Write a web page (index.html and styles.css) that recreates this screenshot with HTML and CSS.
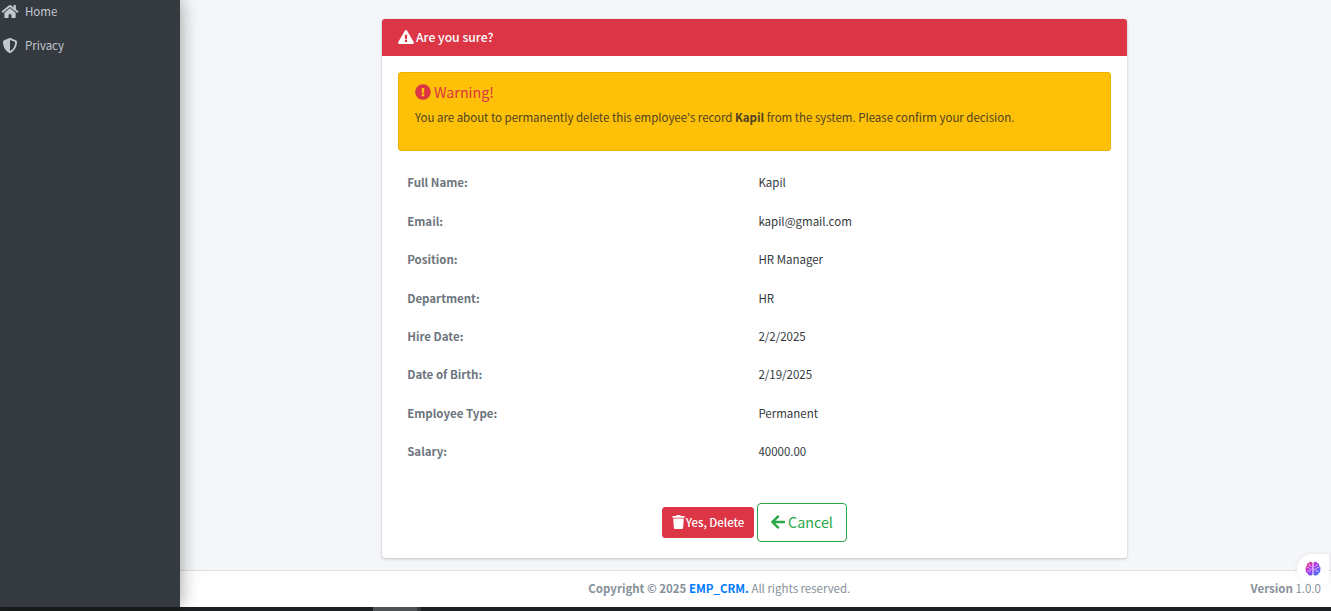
FILE: index.html
```html
<!DOCTYPE html>
<html lang="en">
<head>
<meta charset="utf-8">
<title>Delete employee - EMP_CRM</title>
<link rel="stylesheet" href="styles.css">
</head>
<body>
<div class="app">
  <aside class="sidebar">
    <a class="nav-link"><svg class="nav-icon home" viewBox="0 0 576 512"><path d="M280.4 148.3 96 300.1V464a16 16 0 0 0 16 16l112.1-.3a16 16 0 0 0 15.900-16V368a16 16 0 0 1 16-16h64a16 16 0 0 1 16 16v95.600a16 16 0 0 0 16 16.100L464 480a16 16 0 0 0 16-16V300L295.700 148.300a12.200 12.200 0 0 0-15.300 0zM571.600 251.500 488 182.600V44a12 12 0 0 0-12-12h-56a12 12 0 0 0-12 12v72.600L318.500 43a48 48 0 0 0-61 0L4.300 251.500a12 12 0 0 0-1.600 16.900l25.500 31a12 12 0 0 0 16.900 1.600L280.400 107.200a12.200 12.200 0 0 1 15.300 0L530.900 301a12 12 0 0 0 16.900-1.600l25.500-31a12 12 0 0 0-1.700-16.900z"/></svg><span>Home</span></a>
    <a class="nav-link"><svg class="nav-icon shield" viewBox="0 0 512 512"><path d="M466.500 83.700l-192-80a48.150 48.150 0 0 0-36.900 0l-192 80C27.700 91.100 16 108.600 16 128c0 198.500 114.500 335.700 221.500 380.300 11.800 4.900 25.100 4.900 36.900 0C360.100 472.600 496 349.300 496 128c0-19.400-11.700-36.900-29.500-44.300zM256.100 446.300l-.1-381 175.900 73.300c-3.300 151.400-82.100 261.100-175.800 307.700z"/></svg><span>Privacy</span></a>
  </aside>
  <div class="wrapper">
    <main class="content">
      <section class="card">
        <header class="card-header"><svg class="icon-warn" viewBox="0 0 576 512"><path d="M569.500 440C588 472 564.800 512 527.900 512H48.100c-36.900 0-60-40.100-41.600-72L246.400 24c18.500-32 64.700-32 83.200 0l239.900 416zM288 354a46 46 0 1 0 0 92 46 46 0 0 0 0-92zm-43.700-165.300 7.400 136a12 12 0 0 0 12 11.300h48.600a12 12 0 0 0 12-11.300l7.400-136a12 12 0 0 0-12-12.700h-63.400a12 12 0 0 0-12 12.700z"/></svg><span>Are you sure?</span></header>
        <div class="card-body">
          <div class="alert">
            <h4 class="alert-title"><svg class="icon-circle" viewBox="0 0 512 512"><path d="M504 256c0 137-111 248-248 248S8 393 8 256 119 8 256 8s248 111 248 248zM256 306a46 46 0 1 0 0 92 46 46 0 0 0 0-92zm-43.700-165.300 7.400 136a12 12 0 0 0 12 11.300h48.600a12 12 0 0 0 12-11.300l7.400-136a12 12 0 0 0-12-12.700h-63.400a12 12 0 0 0-12 12.700z"/></svg><span>Warning!</span></h4>
            <p class="alert-text">You are about to permanently delete this employee's record <strong>Kapil</strong> from the system. Please confirm your decision.</p>
          </div>
          <dl class="details">
            <dt>Full Name:</dt><dd>Kapil</dd>
            <dt>Email:</dt><dd>kapil@gmail.com</dd>
            <dt>Position:</dt><dd>HR Manager</dd>
            <dt>Department:</dt><dd>HR</dd>
            <dt>Hire Date:</dt><dd>2/2/2025</dd>
            <dt>Date of Birth:</dt><dd>2/19/2025</dd>
            <dt>Employee Type:</dt><dd>Permanent</dd>
            <dt>Salary:</dt><dd>40000.00</dd>
          </dl>
          <div class="actions">
            <button class="btn btn-danger"><svg class="icon-trash" viewBox="0 0 448 512"><path d="M432 32H312l-9.400-18.700A24 24 0 0 0 281.100 0H166.800a23.700 23.700 0 0 0-21.400 13.300L136 32H16A16 16 0 0 0 0 48v32a16 16 0 0 0 16 16h416a16 16 0 0 0 16-16V48a16 16 0 0 0-16-16zM53.200 467a48 48 0 0 0 47.900 45h245.800a48 48 0 0 0 47.900-45L416 128H32z"/></svg><span>Yes, Delete</span></button>
            <button class="btn btn-cancel"><svg class="icon-arrow" viewBox="0 0 448 512"><path d="M257.500 445.100l-22.200 22.200c-9.400 9.400-24.600 9.400-33.900 0L7 273c-9.400-9.400-9.400-24.600 0-33.900L201.400 44.700c9.400-9.400 24.600-9.400 33.900 0l22.200 22.200c9.500 9.500 9.300 25-.4 34.300L136.600 216H424c13.300 0 24 10.700 24 24v32c0 13.300-10.700 24-24 24H136.600l120.500 114.800c9.800 9.300 10 24.800.4 34.300z"/></svg><span>Cancel</span></button>
          </div>
        </div>
      </section>
    </main>
    <footer class="footer">
      <div class="copyright"><strong>Copyright © 2025 <a>EMP_CRM.</a></strong> <span>All rights reserved.</span></div>
      <div class="version"><b>Version</b> 1.0.0</div>
    </footer>
  </div>
</div>
<div class="taskbar"><span class="task"></span><span class="task-edge"></span></div>
<div class="assistant">
  <svg class="brain" viewBox="0 0 16 16">
    <defs><linearGradient id="brain-fill" x1="0" y1="0" x2="1" y2="1"><stop offset="0" stop-color="#ff4560"/><stop offset=".45" stop-color="#a838f0"/><stop offset="1" stop-color="#2f7cf6"/></linearGradient></defs>
    <path fill="url(#brain-fill)" d="M7.500 1.800C6.500.2 4.300.4 3.800 2 2.200 2.200 1.400 3.500 1.800 4.900.4 5.800 0 7.600.9 8.800.2 10.300 1 12 2.500 12.300c.3 1.700 2 2.500 3.300 1.900.8.5 1.500.2 1.700-.6zM8.500 1.800C9.500.2 11.700.4 12.200 2c1.600.2 2.400 1.500 2 2.900 1.400.9 1.800 2.700.9 3.900.7 1.500-.1 3.200-1.600 3.500-.3 1.700-2 2.500-3.300 1.900-.8.5-1.500.2-1.700-.6z"/>
    <path class="folds" d="M4 3.500c0 1.300 1 1.900 2.100 1.800M2 6.500c1.200-.4 2.200.1 2.500 1.100M7 8c-1.300-.1-2.200.7-2.100 2M2.600 10.200c.8-.4 1.500 0 1.900.6M12 3.500c0 1.300-1 1.900-2.100 1.800M14 6.500c-1.200-.4-2.200.1-2.500 1.100M9 8c1.300-.1 2.200.7 2.100 2M13.400 10.200c-.8-.4-1.500 0-1.900.6"/>
  </svg>
</div>
</body>
</html>
```
FILE: styles.css
```css
* { box-sizing: border-box; }
body {
  margin: 0;
  height: 611px;
  overflow: hidden;
  display: flex;
  flex-direction: column;
  background: #f4f6f9;
  color: #212529;
  font: 11.5px/19.2px "Noto Sans CJK SC", "Open Sans", sans-serif;
}
svg { display: block; flex: none; fill: currentColor; }
.app { display: flex; height: 607px; }
.sidebar {
  width: 180px;
  flex: none;
  z-index: 1;
  background: #343a40;
  color: #c2c7d0;
  box-shadow: 0 0 22px rgba(0,0,0,.2), 0 0 14px rgba(0,0,0,.22);
}
.nav-link { display: flex; align-items: center; height: 34px; }
.nav-link:first-child { margin-top: -5px; }
.nav-icon { width: 20px; height: 14px; margin: -1px 5px 0 0; }
.shield { height: 15px; margin-top: -2px; }
.home { height: 15px; }
.wrapper { flex: 1; display: flex; flex-direction: column; }
.content { flex: 1; padding: 19px 204px 12px 202px; }
.card {
  height: 539px;
  background: #fff;
  border-radius: 3px;
  box-shadow: 0 0 1px rgba(0,0,0,.13), 0 1px 3px rgba(0,0,0,.2);
}
.card-header {
  display: flex;
  align-items: center;
  gap: 2px;
  height: 37px;
  padding: 0 16px 1px;
  color: #fff;
  background: #dc3545;
  border-radius: 3px 3px 0 0;
  font-size: 12.2px;
  line-height: 19px;
  font-weight: 500;
}
.icon-warn { width: 16px; height: 14px; }
.card-body { padding: 16px; }
.alert {
  height: 79px;
  padding: 10px 16px;
  border: 1px solid #edb100;
  border-radius: 3px;
  background: #ffc107;
}
.alert-title {
  display: flex;
  align-items: center;
  gap: 3px;
  margin: 0 0 6px;
  font-size: 14.3px;
  line-height: 18px;
  font-weight: 400;
  color: #dc3545;
}
.icon-circle { width: 16px; height: 16px; }
.alert-text { margin: 0; line-height: 20px; letter-spacing: -.025px; color: #4d4220; }
.details {
  display: grid;
  grid-template-columns: 351.200px 1fr;
  grid-auto-rows: 38.4px;
  align-items: center;
  margin: 12.8px 0 0;
  padding-left: 9.2px;
}
.details dt { font-weight: 700; color: #6c757d; }
.details dd { margin: 0; color: #343a40; }
.actions {
  display: flex;
  justify-content: center;
  align-items: center;
  gap: 3px;
  margin-top: 32.2px;
}
.btn {
  display: flex;
  align-items: center;
  justify-content: center;
  padding: 0 0 1px;
  font-family: inherit;
  border-radius: 3px;
}
.btn-danger {
  width: 92px;
  height: 31px;
  gap: 1px;
  border: 1px solid #dc3545;
  background: #dc3545;
  color: #fff;
  font-size: 11.5px;
  font-weight: 500;
  letter-spacing: -.05px;
}
.icon-trash { width: 13px; height: 14px; }
.btn-cancel {
  width: 90px;
  height: 39px;
  gap: 3px;
  padding-bottom: 2px;
  border: 1px solid #28a745;
  border-radius: 4px;
  background: #fff;
  color: #28a745;
  font-size: 14.3px;
}
.icon-arrow { width: 14px; height: 16px; }
.footer {
  display: flex;
  align-items: center;
  height: 37px;
  padding: 0 10px;
  background: #fff;
  border-top: 1px solid #dee2e6;
  color: #869099;
}
.copyright { flex: 1; text-align: center; letter-spacing: -.02px; padding-right: 2px; }
.version { flex: none; }
.copyright a { color: #007bff; }
.taskbar { display: flex; height: 4px; padding-left: 373px; background: #1c1f1f; }
.task { width: 44px; background: #505353; }
.task-edge { width: 4px; background: #343737; }
.assistant {
  position: absolute;
  z-index: 2;
  top: 554px;
  right: 2px;
  width: 32px;
  height: 30px;
  padding: 7px 0 0 8px;
  border-radius: 15px 0 0 15px;
  background: #fff;
  box-shadow: 0 0 5px rgba(0,0,0,.08);
}
.brain { width: 16px; height: 16px; }
.folds { fill: none; stroke: #fff; stroke-width: .6; stroke-linecap: round; }
```
